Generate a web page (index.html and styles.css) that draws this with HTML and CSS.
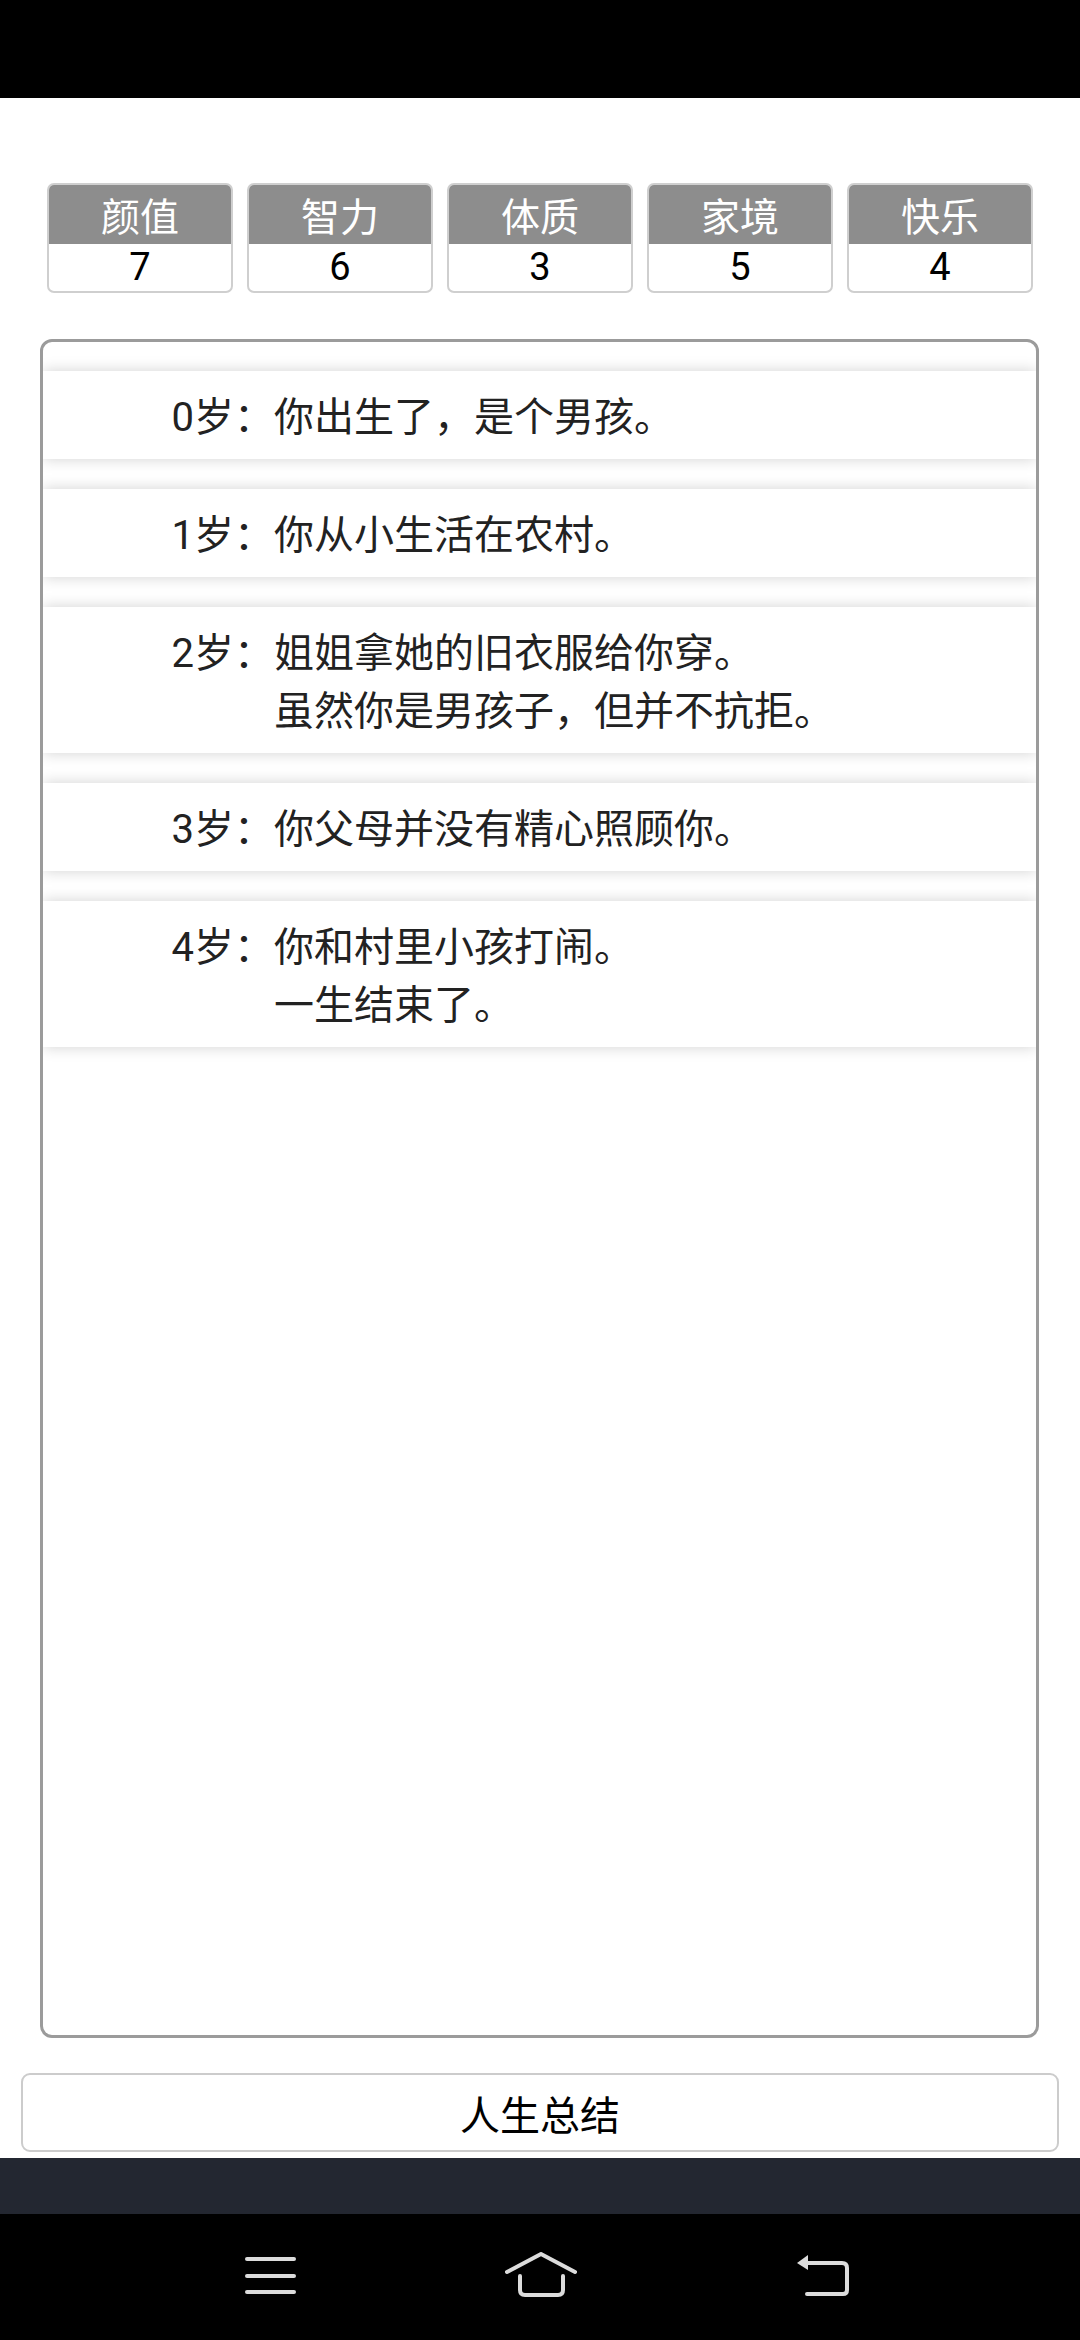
FILE: index.html
```html
<!DOCTYPE html>
<html lang="zh-CN">
<head>
<meta charset="utf-8">
<title>人生重开模拟器</title>
<link rel="stylesheet" href="styles.css">
</head>
<body>
<div class="status-bar"></div>
<main class="page">
  <div class="stats">
    <div class="stat"><div class="stat-name">颜值</div><div class="stat-value">7</div></div>
    <div class="stat"><div class="stat-name">智力</div><div class="stat-value">6</div></div>
    <div class="stat"><div class="stat-name">体质</div><div class="stat-value">3</div></div>
    <div class="stat"><div class="stat-name">家境</div><div class="stat-value">5</div></div>
    <div class="stat"><div class="stat-name">快乐</div><div class="stat-value">4</div></div>
  </div>
  <ul class="trajectory">
    <li class="event"><span class="age">0岁：</span><span class="desc">你出生了，是个男孩。</span></li>
    <li class="event"><span class="age">1岁：</span><span class="desc">你从小生活在农村。</span></li>
    <li class="event"><span class="age">2岁：</span><span class="desc">姐姐拿她的旧衣服给你穿。<br>虽然你是男孩子，但并不抗拒。</span></li>
    <li class="event"><span class="age">3岁：</span><span class="desc">你父母并没有精心照顾你。</span></li>
    <li class="event"><span class="age">4岁：</span><span class="desc">你和村里小孩打闹。<br>一生结束了。</span></li>
  </ul>
  <button class="summary-btn">人生总结</button>
</main>
<div class="app-bottom"></div>
<nav class="nav-bar">
  <svg class="nav-menu" width="52" height="40" viewBox="0 0 52 40">
    <g stroke="#dcdcdc" stroke-width="4" stroke-linecap="round">
      <line x1="2" y1="3" x2="49" y2="3"/>
      <line x1="2" y1="20" x2="49" y2="20"/>
      <line x1="2" y1="36" x2="49" y2="36"/>
    </g>
  </svg>
  <svg class="nav-home" width="72" height="46" viewBox="0 0 72 46">
    <g fill="none" stroke="#dcdcdc" stroke-width="4" stroke-linecap="round" stroke-linejoin="round">
      <polyline points="2,20 36,2 70,20"/>
      <path d="M15 24 V38 Q15 43 20 43 H53 Q58 43 58 38 V24"/>
    </g>
  </svg>
  <svg class="nav-back" width="54" height="44" viewBox="0 0 54 44">
    <path d="M1 10 L12 2 L12 17 Z" fill="#dcdcdc"/>
    <path d="M11 10 H46 Q51 10 51 15 V37 Q51 41 47 41 H11" fill="none" stroke="#dcdcdc" stroke-width="4" stroke-linecap="round" stroke-linejoin="round"/>
  </svg>
</nav>
</body>
</html>
```

FILE: styles.css
```css
* {
  box-sizing: border-box;
}

html, body {
  margin: 0;
  padding: 0;
}

body {
  width: 1080px;
  height: 2340px;
  background: #ffffff;
  font-family: "Noto Sans CJK SC", "Noto Sans", Roboto, sans-serif;
  color: #222222;
  overflow: hidden;
}

.status-bar {
  height: 98px;
  background: #000000;
}

.page {
  height: 2060px;
  display: flex;
  flex-direction: column;
  background: #ffffff;
}

.stats {
  display: grid;
  grid-template-columns: repeat(5, 186px);
  column-gap: 14px;
  margin: 85px 0 0 47px;
}

.stat {
  height: 110px;
  border: 2px solid #cfcfcf;
  border-radius: 7px;
  overflow: hidden;
  display: flex;
  flex-direction: column;
  background: #ffffff;
}

.stat-name {
  height: 59px;
  background: #8d8d8d;
  color: #ffffff;
  font-size: 39px;
  line-height: 59px;
  text-align: center;
}

.stat-value {
  flex: 1;
  color: #000000;
  font-family: Roboto, "Noto Sans CJK SC", sans-serif;
  font-size: 38px;
  line-height: 46px;
  text-align: center;
}

.trajectory {
  list-style: none;
  margin: 46px 0 0 40px;
  padding: 29px 0 0 0;
  width: 999px;
  height: 1699px;
  border: 3px solid #9b9b9b;
  border-radius: 12px;
  overflow: hidden;
  display: flex;
  flex-direction: column;
  gap: 30px;
}

.event {
  display: flex;
  background: #ffffff;
  padding: 18px 0 12px 0;
  font-family: Roboto, "Noto Sans CJK SC", sans-serif;
  font-size: 40px;
  line-height: 58px;
  color: #222222;
  box-shadow: 0 0 14px rgba(0, 0, 0, 0.18);
}

.age {
  width: 231px;
  flex: none;
  text-align: right;
}

.desc {
  flex: 1;
}

.summary-btn {
  margin: 35px 0 0 21px;
  width: 1038px;
  height: 79px;
  border: 2px solid #cccccc;
  border-radius: 9px;
  background: #ffffff;
  font-family: "Noto Sans CJK SC", "Noto Sans", sans-serif;
  font-size: 40px;
  color: #000000;
  padding: 0;
}

.app-bottom {
  height: 56px;
  background: #232731;
}

.nav-bar {
  height: 126px;
  background: #000000;
  display: flex;
  align-items: center;
  padding-left: 245px;
}

.nav-menu {
  margin-top: -3px;
}

.nav-home {
  margin-left: 208px;
  margin-top: -5px;
}

.nav-back {
  margin-left: 219px;
  margin-top: -5px;
}
```
